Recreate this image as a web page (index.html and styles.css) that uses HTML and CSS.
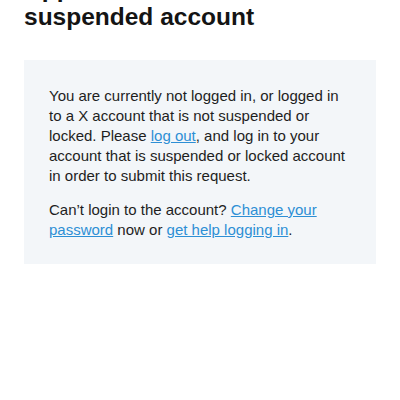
FILE: index.html
```html
<!DOCTYPE html>
<html>
<head>
<meta charset="utf-8">
<link rel="stylesheet" href="styles.css">
</head>
<body>
<main class="page">
  <h1 class="title">Appeal a locked or suspended account</h1>
  <section class="notice">
    <p>You are currently not logged in, or logged in to a X account that is not suspended or locked. Please <a href="#">log out</a>, and log in to your account that is suspended or locked account in order to submit this request.</p>
    <p>Can’t login to the account? <a href="#">Change your password</a> now or <a href="#">get help logging in</a>.</p>
  </section>
</main>
</body>
</html>
```
FILE: styles.css
```css
html, body {
  margin: 0;
  padding: 0;
  background: #ffffff;
}
.page {
  padding: 0 24px;
  font-family: "Liberation Sans", Arial, sans-serif;
  color: #1e1e1e;
}
.title {
  margin: -25px 0 29px 0;
  font-size: 24.5px;
  line-height: 28px;
  font-weight: 700;
  color: #141414;
  width: 260px;
}
.notice {
  background: #f3f6f9;
  padding: 26px 25px 24px 25px;
}
.notice p {
  margin: 0;
  font-size: 15px;
  line-height: 20px;
}
.notice p + p {
  margin-top: 14px;
}
.notice a {
  color: #2d8fd5;
  text-decoration: underline;
}
```
